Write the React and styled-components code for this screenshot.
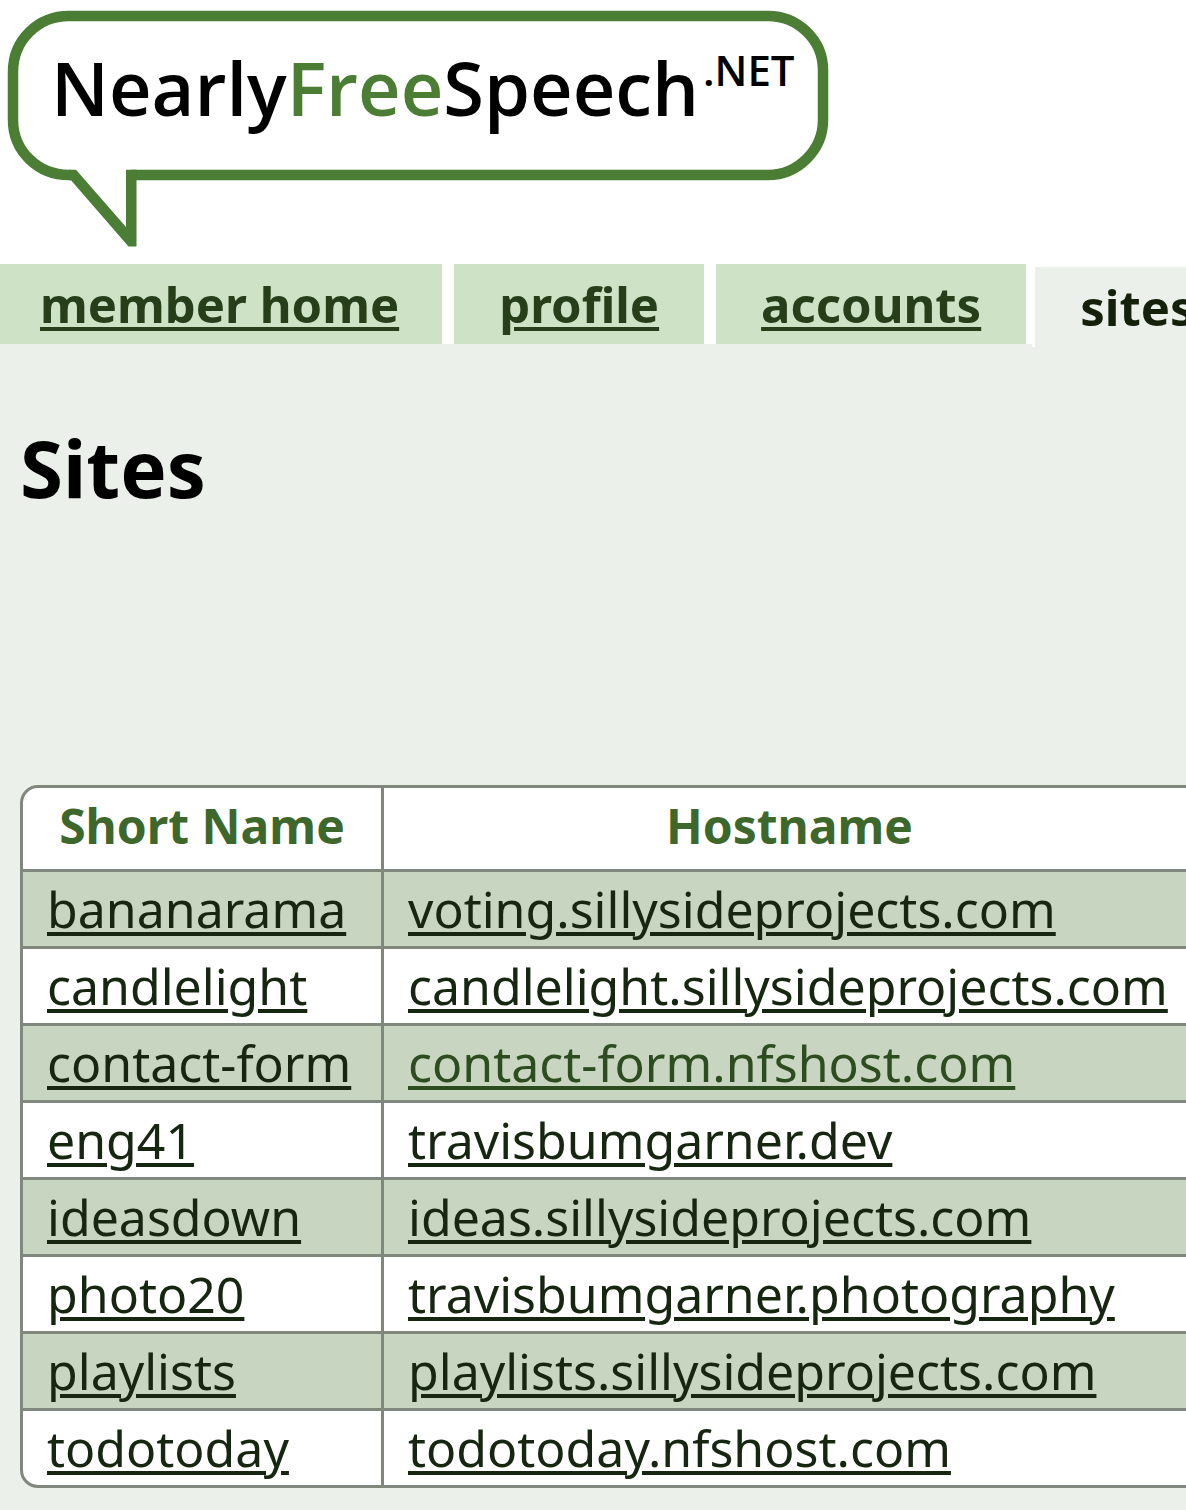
import React from "react";
import styled, { createGlobalStyle } from "styled-components";

const GlobalStyle = createGlobalStyle`
  * { box-sizing: border-box; }
  body {
    margin: 0;
    background: #ebf0ea;
    color: #000;
    font-family: "Lucida Grande", "Noto Sans", "Open Sans", sans-serif;
    font-size: 50px;
    line-height: 68px;
    overflow-x: hidden;
  }
`;

const Page = styled.div`
  overflow: hidden;
`;

const Header = styled.header`
  background: #fff;
`;

const HomeLink = styled.a`
  display: block;
  text-decoration: none;
`;

const LogoDrawing = styled.svg`
  display: block;
`;

const Wordmark = styled.text`
  font-family: "Trebuchet MS", "Open Sans", sans-serif;
  font-weight: 600;
  font-size: ${(p) => p.$size}px;
  fill: #000;
`;

const Accent = styled.tspan`
  fill: #4b7d35;
`;

const TabList = styled.ul`
  display: flex;
  gap: 12px;
  height: 80px;
  margin: 0;
  padding: 0;
  list-style: none;
  background: #fff;
`;

const Tab = styled.li`
  flex: none;
  height: 80px;
  padding: 0 45px;
  background: #cee2c6;
  font-size: 49px;
  font-weight: 700;
  line-height: 80px;
  color: #263f1a;

  &:first-child {
    padding: 0 43px 0 40px;
  }
`;

const ActiveTab = styled(Tab)`
  height: 83px;
  margin-left: -6px;
  border: solid #fff;
  border-width: 3px 0 0 3px;
  background: #ebf0ea;
  color: #142009;
`;

const TabLink = styled.a`
  color: inherit;
  text-decoration: underline;
  text-decoration-thickness: 4px;
  text-underline-offset: 4px;
`;

const Main = styled.main`
  padding: 74px 0 22px 20px;
`;

const Title = styled.h1`
  margin: 0 0 267px;
  font-size: 78px;
  font-weight: 700;
  line-height: 100px;
`;

const SitesTable = styled.table`
  width: 1240px;
  table-layout: fixed;
  border: 3px solid #80887e;
  border-radius: 18px;
  border-spacing: 0;
  background: #fff;
  overflow: hidden;
`;

const NameColumn = styled.col`
  width: 361px;
`;

const HeadCell = styled.th`
  height: 84px;
  padding: 0 24px 6px;
  border-right: 3px solid #80887e;
  border-bottom: 3px solid #80887e;
  font-size: 48px;
  font-weight: 700;
  color: #3e672b;

  &:last-child {
    padding-right: 86px;
    border-right: 0;
  }
`;

const Row = styled.tr`
  &:nth-child(odd) {
    background: #c8d6c1;
  }
  &:last-child > td {
    height: 74px;
    border-bottom: 0;
  }
`;

const Cell = styled.td`
  height: 77px;
  padding: 0 24px;
  border-right: 3px solid #80887e;
  border-bottom: 3px solid #80887e;
  white-space: nowrap;

  &:last-child {
    border-right: 0;
  }
`;

const SiteLink = styled.a`
  color: ${(p) => (p.$highlight ? "#2d4c20" : "#162611")};
  text-decoration: underline;
  text-decoration-thickness: 4px;
  text-underline-offset: 4px;
`;

const tabs = ["member home", "profile", "accounts"];

const sites = [
  { name: "bananarama", host: "voting.sillysideprojects.com" },
  { name: "candlelight", host: "candlelight.sillysideprojects.com" },
  { name: "contact-form", host: "contact-form.nfshost.com", highlight: true },
  { name: "eng41", host: "travisbumgarner.dev" },
  { name: "ideasdown", host: "ideas.sillysideprojects.com" },
  { name: "photo20", host: "travisbumgarner.photography" },
  { name: "playlists", host: "playlists.sillysideprojects.com" },
  { name: "todotoday", host: "todotoday.nfshost.com" },
];

function Logo() {
  return (
    <LogoDrawing width="840" height="264" viewBox="0 0 840 264">
      <path
        d="M131 175H768C798 175 823 150 823 120V70C823 40 798 16 768 16H69C38 16 13 40 13 72V120C13 151 38 175 69 175H71"
        fill="#fff"
        stroke="#4b7d35"
        strokeWidth="10.5"
      />
      <path
        d="M69 169.7H76L126 227V169.7H136.5V246.5H128.5L71 180.2H69Z"
        fill="#4b7d35"
      />
      <Wordmark $size={74} x="51" y="116">
        Nearly<Accent>Free</Accent>Speech
      </Wordmark>
      <Wordmark $size={42} x="703" y="86">.NET</Wordmark>
    </LogoDrawing>
  );
}

export default function App() {
  return (
    <Page>
      <GlobalStyle />
      <Header>
        <HomeLink href="#home">
          <Logo />
        </HomeLink>
      </Header>
      <nav>
        <TabList>
          {tabs.map((tab) => (
            <Tab key={tab}>
              <TabLink href={"#" + tab.replace(" ", "-")}>{tab}</TabLink>
            </Tab>
          ))}
          <ActiveTab aria-current="page">sites</ActiveTab>
        </TabList>
      </nav>
      <Main>
        <Title>Sites</Title>
        <SitesTable>
          <colgroup>
            <NameColumn />
            <col />
          </colgroup>
          <thead>
            <tr>
              <HeadCell scope="col">Short Name</HeadCell>
              <HeadCell scope="col">Hostname</HeadCell>
            </tr>
          </thead>
          <tbody>
            {sites.map((site) => (
              <Row key={site.name}>
                <Cell>
                  <SiteLink href={"#" + site.name}>{site.name}</SiteLink>
                </Cell>
                <Cell>
                  <SiteLink href={"#" + site.host} $highlight={site.highlight}>
                    {site.host}
                  </SiteLink>
                </Cell>
              </Row>
            ))}
          </tbody>
        </SitesTable>
      </Main>
    </Page>
  );
}
